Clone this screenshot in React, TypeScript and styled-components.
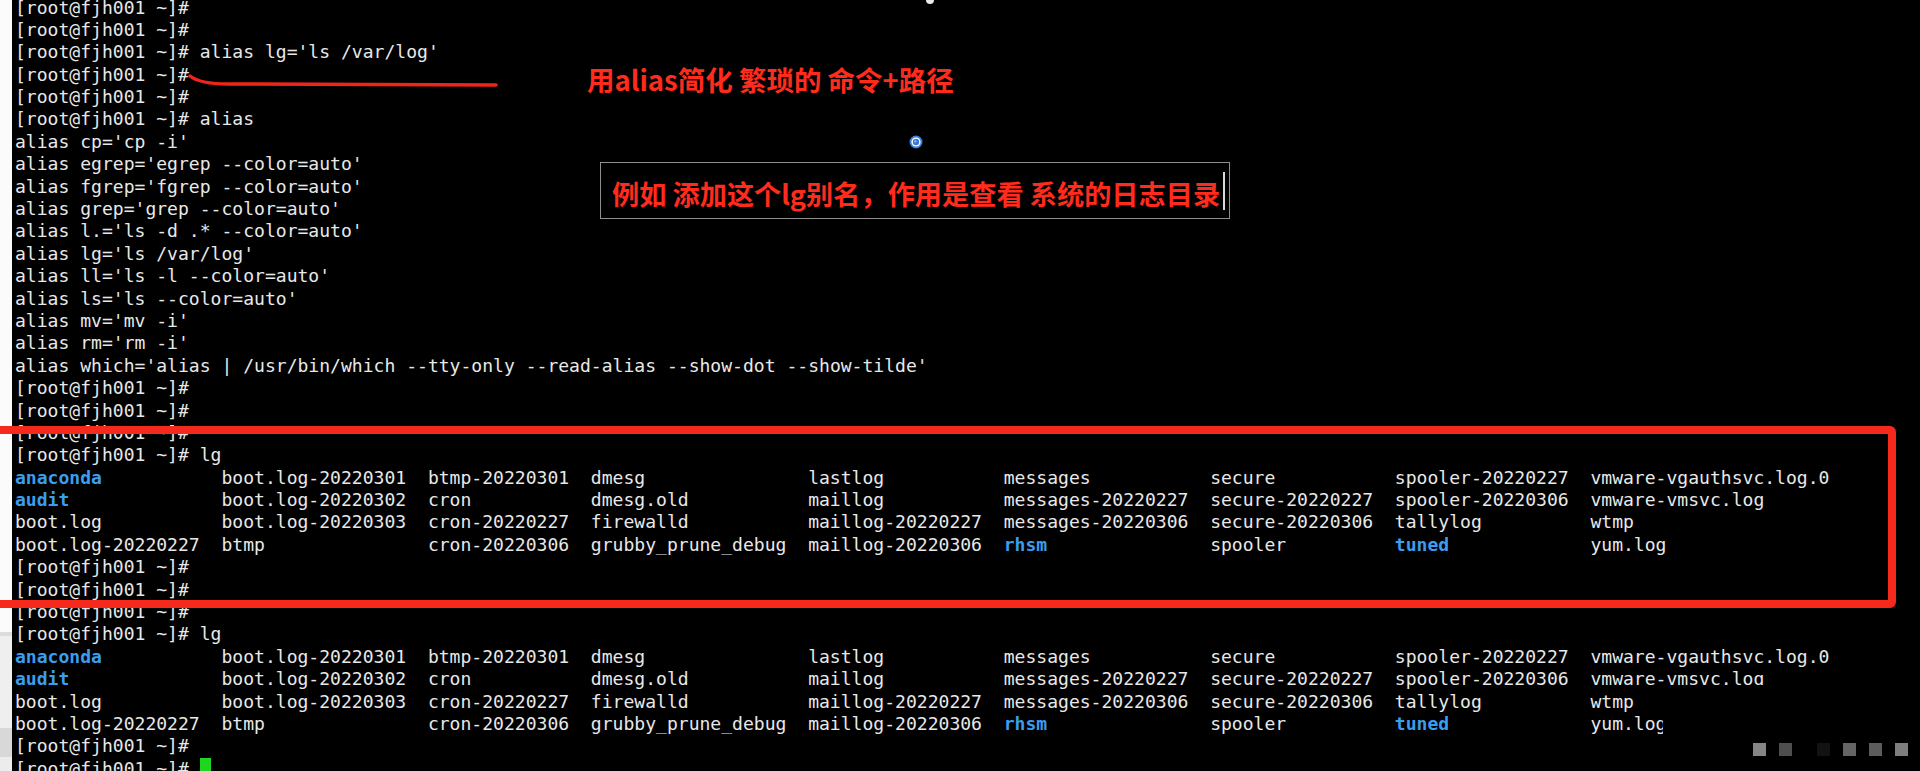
import React from "react";
import styled, { createGlobalStyle } from "styled-components";

const GlobalStyle = createGlobalStyle`
  html, body { margin: 0; padding: 0; background: #000; overflow: hidden; }
  #root { width: 1920px; height: 771px; }
`;

const Screen = styled.div`
  position: relative;
  display: flex;
  width: 1920px;
  height: 771px;
  overflow: hidden;
  background: #000;
`;

const Gutter = styled.div`
  flex: none;
  width: 12px;
  background: linear-gradient(
    #fbfbfb 0, #fbfbfb 632px, #dcdcdc 632px, #dcdcdc 636px,
    #efefef 636px, #efefef 728px, #d8d8d8 728px, #d8d8d8 757px, #ececec 757px
  );
`;

const Terminal = styled.div`
  flex: 1;
  display: flex;
  flex-direction: column;
  margin-top: -3.5px;
  padding-left: 3px;
  font-family: "DejaVu Sans Mono", "Liberation Mono", monospace;
  font-size: 18.06px;
  line-height: 22.4px;
  color: #e8e8e8;
`;

const Line = styled.div`
  height: 22.4px;
  white-space: pre;
`;

const LsRow = styled.div`
  display: grid;
  grid-template-columns: 19ch 19ch 15ch 20ch 18ch 19ch 17ch 18ch auto;
  height: 22.4px;
  white-space: pre;
`;

const Entry = styled.span<{ $dir?: boolean }>`
  color: ${(p) => (p.$dir ? "#3b9ded" : "#e8e8e8")};
  font-weight: ${(p) => (p.$dir ? 700 : 400)};
`;

const Cursor = styled.span`
  display: inline-block;
  width: 1ch;
  height: 22.4px;
  vertical-align: top;
  background: #1fd51f;
`;

const RedFrame = styled.div`
  position: absolute;
  left: -20px;
  top: 426px;
  width: 1916px;
  height: 182px;
  box-sizing: border-box;
  border: 8px solid #f52a1c;
  border-radius: 6px;
  pointer-events: none;
`;

const Stroke = styled.svg`
  position: absolute;
  left: 0;
  top: 0;
  overflow: visible;
`;

const Note = styled.div`
  position: absolute;
  left: 587px;
  top: 66px;
  font-family: "Microsoft YaHei", "Noto Sans CJK SC", sans-serif;
  font-weight: 700;
  font-size: 27.5px;
  line-height: 27.5px;
  color: #ff2b1c;
  white-space: nowrap;
`;

const NoteBox = styled.div`
  position: absolute;
  left: 600px;
  top: 162px;
  width: 630px;
  height: 57px;
  box-sizing: border-box;
  border: 1px solid #8f8f8f;
  display: flex;
  align-items: center;
  padding-left: 11px;
`;

const NoteText = styled.span`
  margin-top: 6px;
  font-family: "Microsoft YaHei", "Noto Sans CJK SC", sans-serif;
  font-weight: 700;
  font-size: 27.2px;
  line-height: 27.2px;
  color: #ff2b1c;
  white-space: nowrap;
`;

const Caret = styled.span`
  width: 2px;
  height: 38px;
  margin-left: 3px;
  background: #d8d8d8;
`;

const Marker = styled.svg`
  position: absolute;
  left: 909px;
  top: 135px;
`;

const TopDot = styled.div`
  position: absolute;
  left: 926px;
  top: -4px;
  width: 8px;
  height: 8px;
  border-radius: 50%;
  background: #e8eaf2;
`;

const Mask = styled.div`
  position: absolute;
  left: 1663px;
  top: 685px;
  right: 0;
  bottom: 0;
  background: #000;
`;

const Dots = styled.div`
  position: absolute;
  left: 1753px;
  top: 743px;
  display: flex;
  gap: 13px;
`;

const Square = styled.span<{ $c: string; $gapBefore?: number }>`
  width: 13px;
  height: 13px;
  background: ${(p) => p.$c};
  margin-left: ${(p) => p.$gapBefore ?? 0}px;
`;

const P = "[root@fjh001 ~]#";

type E = [string, boolean?];
const lsRows: E[][] = [
  [["anaconda", true], ["boot.log-20220301"], ["btmp-20220301"], ["dmesg"], ["lastlog"], ["messages"], ["secure"], ["spooler-20220227"], ["vmware-vgauthsvc.log.0"]],
  [["audit", true], ["boot.log-20220302"], ["cron"], ["dmesg.old"], ["maillog"], ["messages-20220227"], ["secure-20220227"], ["spooler-20220306"], ["vmware-vmsvc.log"]],
  [["boot.log"], ["boot.log-20220303"], ["cron-20220227"], ["firewalld"], ["maillog-20220227"], ["messages-20220306"], ["secure-20220306"], ["tallylog"], ["wtmp"]],
  [["boot.log-20220227"], ["btmp"], ["cron-20220306"], ["grubby_prune_debug"], ["maillog-20220306"], ["rhsm", true], ["spooler"], ["tuned", true], ["yum.log"]],
];

const aliasLines = [
  "alias cp='cp -i'",
  "alias egrep='egrep --color=auto'",
  "alias fgrep='fgrep --color=auto'",
  "alias grep='grep --color=auto'",
  "alias l.='ls -d .* --color=auto'",
  "alias lg='ls /var/log'",
  "alias ll='ls -l --color=auto'",
  "alias ls='ls --color=auto'",
  "alias mv='mv -i'",
  "alias rm='rm -i'",
  "alias which='alias | /usr/bin/which --tty-only --read-alias --show-dot --show-tilde'",
];

const LsBlock = () => (
  <>
    {lsRows.map((row, i) => (
      <LsRow key={i}>
        {row.map(([name, dir], j) => (
          <Entry key={j} $dir={dir}>
            {name}
          </Entry>
        ))}
      </LsRow>
    ))}
  </>
);

export default function App() {
  return (
    <>
      <GlobalStyle />
      <Screen>
        <Gutter />
        <Terminal>
          <Line>{P}</Line>
          <Line>{P}</Line>
          <Line>{P} alias lg='ls /var/log'</Line>
          <Line>{P}</Line>
          <Line>{P}</Line>
          <Line>{P} alias</Line>
          {aliasLines.map((l) => (
            <Line key={l}>{l}</Line>
          ))}
          <Line>{P}</Line>
          <Line>{P}</Line>
          <Line>{P}</Line>
          <Line>{P} lg</Line>
          <LsBlock />
          <Line>{P}</Line>
          <Line>{P}</Line>
          <Line>{P}</Line>
          <Line>{P} lg</Line>
          <LsBlock />
          <Line>{P}</Line>
          <Line>
            {P} <Cursor />
          </Line>
        </Terminal>

        <Stroke width="520" height="100" viewBox="0 0 520 100">
          <path
            d="M190 76 Q200 84 228 84 L496 85"
            fill="none"
            stroke="#f02418"
            strokeWidth="3.5"
            strokeLinecap="round"
          />
        </Stroke>

        <Note>用alias简化 繁琐的 命令+路径</Note>

        <NoteBox>
          <NoteText>例如 添加这个lg别名，作用是查看 系统的日志目录</NoteText>
          <Caret />
        </NoteBox>

        <Marker width="14" height="14" viewBox="0 0 14 14">
          <circle cx="7" cy="7" r="6.5" fill="#3a7fdc" />
          <circle cx="7" cy="7" r="4.6" fill="#ffffff" />
          <circle cx="7" cy="7" r="3.2" fill="#3b78d6" />
          <circle cx="6.3" cy="6.3" r="1.1" fill="#9cc1f0" />
        </Marker>

        <TopDot />
        <RedFrame />
        <Mask />
        <Dots>
          <Square $c="#858585" />
          <Square $c="#4e4e4e" />
          <Square $c="#121212" $gapBefore={12} />
          <Square $c="#656565" />
          <Square $c="#5c5c5c" />
          <Square $c="#7e7e7e" />
        </Dots>
      </Screen>
    </>
  );
}
